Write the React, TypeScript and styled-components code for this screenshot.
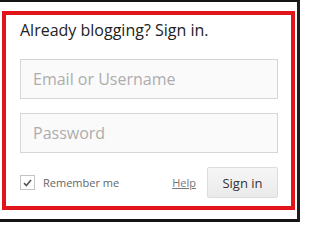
import React from "react";
import styled, { createGlobalStyle } from "styled-components";

const GlobalStyle = createGlobalStyle`
  html, body {
    margin: 0;
    padding: 0;
    background: #fff;
  }
  * {
    box-sizing: border-box;
  }
`;

const Frame = styled.div`
  width: 300px;
  height: 222px;
  padding: 9px 0 0 2px;
  border-top: 2px solid #141414;
  border-right: 3px solid #1e1e1e;
  border-bottom: 3px solid #141414;
  background: #fff;
  font-family: "Open Sans", "Noto Sans", sans-serif;
`;

const Panel = styled.form`
  width: 293px;
  height: 199px;
  border: 4px solid #e2141b;
  padding: 4px 13px 0 14px;
  display: flex;
  flex-direction: column;
`;

const Heading = styled.h2`
  margin: 0 0 18px;
  font-size: 16px;
  line-height: 22px;
  font-weight: 400;
  color: #222;
`;

const Field = styled.input`
  width: 258px;
  height: 40px;
  margin: 0 0 14px;
  padding: 0 12px;
  border: 1px solid #d6d6d6;
  background: #fafafa;
  font-family: inherit;
  font-size: 16px;
  color: #333;
  outline: none;

  &::placeholder {
    color: #adadad;
  }
`;

const Footer = styled.div`
  display: flex;
  align-items: center;
  height: 31px;
  width: 258px;
`;

const CheckBox = styled.span`
  width: 15px;
  height: 15px;
  border: 1px solid #c4c4c4;
  background: #fff;
  display: flex;
  align-items: center;
  justify-content: center;
`;

const Remember = styled.span`
  margin-left: 8px;
  font-size: 11px;
  color: #666;
`;

const HelpLink = styled.a`
  margin-left: auto;
  font-size: 11px;
  color: #777;
  text-decoration: underline;
`;

const SignInButton = styled.button`
  margin-left: 11px;
  width: 71px;
  height: 31px;
  border: 1px solid #dcdcdc;
  border-radius: 2px;
  background: linear-gradient(#f6f6f6, #eaeaea);
  font-family: inherit;
  font-size: 13px;
  color: #333;
  padding: 0;
`;

const App: React.FC = () => {
  return (
    <>
      <GlobalStyle />
      <Frame>
        <Panel onSubmit={(e) => e.preventDefault()}>
          <Heading>Already blogging? Sign in.</Heading>
          <Field type="text" placeholder="Email or Username" />
          <Field type="password" placeholder="Password" />
          <Footer>
            <CheckBox>
              <svg width="9" height="8" viewBox="0 0 9 8">
                <path d="M1 4.2 L3.4 6.5 L8 1" fill="none" stroke="#555" strokeWidth="1.6" />
              </svg>
            </CheckBox>
            <Remember>Remember me</Remember>
            <HelpLink href="#">Help</HelpLink>
            <SignInButton type="submit">Sign in</SignInButton>
          </Footer>
        </Panel>
      </Frame>
    </>
  );
};

export default App;
